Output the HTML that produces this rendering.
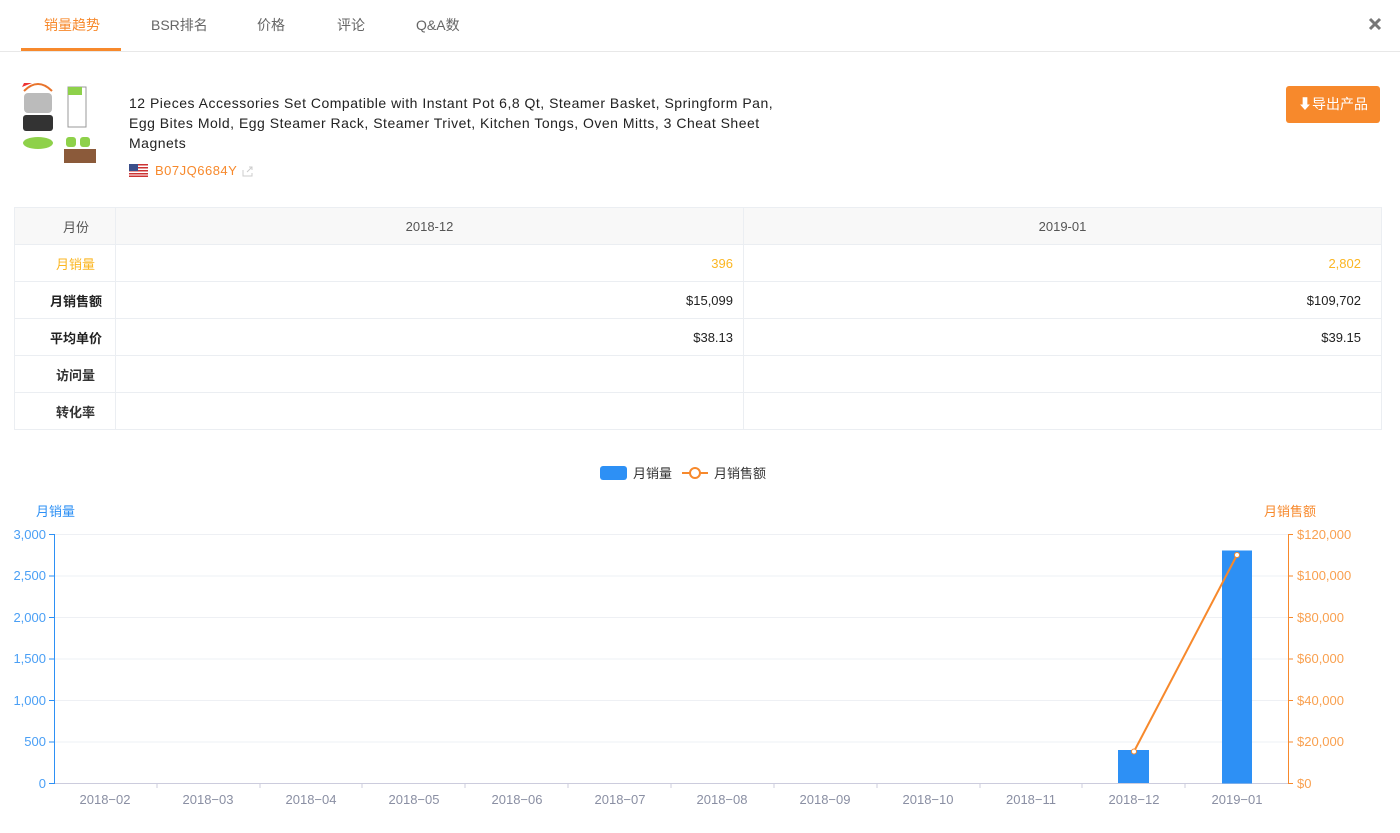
<!DOCTYPE html>
<html><head><meta charset="utf-8"><style>
*{margin:0;padding:0;box-sizing:border-box}
body{width:1400px;height:833px;background:#fff;font-family:"Liberation Sans","Noto Sans CJK SC",sans-serif;position:relative;overflow:hidden;color:#333}
.a{position:absolute;white-space:nowrap}
.tab{top:15px;font-size:14px;color:#666}
td{border:1px solid #ebeef2;height:37px;font-size:13px}
table{border-collapse:collapse;position:absolute;left:14px;top:207px;width:1368px}
</style></head><body>
<div class="a tab" style="left:44px;color:#f7892c">销量趋势</div>
<div class="a tab" style="left:151px">BSR排名</div>
<div class="a tab" style="left:257px">价格</div>
<div class="a tab" style="left:337px">评论</div>
<div class="a tab" style="left:416px">Q&amp;A数</div>
<div class="a" style="left:0;top:51px;width:1400px;height:1px;background:#e8e8e8"></div>
<div class="a" style="left:21px;top:48px;width:100px;height:3px;background:#f7892c"></div>
<svg class="a" style="left:1367px;top:16px" width="16" height="16"><path d="M3 3L13 13M13 3L3 13" stroke="#777" stroke-width="3"/></svg>

<svg class="a" style="left:16px;top:83px" width="84" height="86">
<rect x="8" y="10" width="28" height="20" rx="4" fill="#bbb"/><rect x="7" y="32" width="30" height="16" rx="3" fill="#333"/>
<ellipse cx="22" cy="60" rx="15" ry="6" fill="#8ed14a"/><path d="M6 4 L8 0 L16 0 Z" fill="#e33"/><path d="M8 8Q22 -6 36 8" stroke="#e8742c" stroke-width="2" fill="none"/>
<rect x="52" y="4" width="18" height="40" fill="none" stroke="#999"/><rect x="52" y="4" width="14" height="8" fill="#8ed14a"/>
<rect x="50" y="54" width="10" height="10" rx="3" fill="#8ed14a"/><rect x="64" y="54" width="10" height="10" rx="3" fill="#8ed14a"/>
<rect x="48" y="66" width="32" height="14" fill="#8b5a3a"/>
</svg>
<div class="a" style="left:129px;top:93px;font-size:14px;line-height:20px;color:#222;letter-spacing:0.5px">12 Pieces Accessories Set Compatible with Instant Pot 6,8 Qt, Steamer Basket, Springform Pan,<br>Egg Bites Mold, Egg Steamer Rack, Steamer Trivet, Kitchen Tongs, Oven Mitts, 3 Cheat Sheet<br>Magnets</div>
<svg class="a" style="left:129px;top:164px" width="19" height="13"><rect width="19" height="13" fill="#fff"/><g fill="#c33"><rect y="0" width="19" height="1.5"/><rect y="3" width="19" height="1.5"/><rect y="6" width="19" height="1.5"/><rect y="9" width="19" height="1.5"/><rect y="11.5" width="19" height="1.5"/></g><rect width="9" height="7" fill="#3b4f8a"/></svg>
<div class="a" style="left:155px;top:163px;font-size:13px;color:#f7892c;letter-spacing:0.5px">B07JQ6684Y</div>
<svg class="a" style="left:242px;top:166px" width="12" height="11"><path d="M1 4V10H10V7M5 6L10 1M7 1H10V4" stroke="#ccc" fill="none"/></svg>
<div class="a" style="left:1286px;top:86px;width:94px;height:37px;background:#f7892c;border-radius:3px;color:#fff;font-size:14px;line-height:37px;text-align:center">⬇导出产品</div>

<table>
<tr style="background:#f8f8f8;color:#555"><td style="width:101px;text-align:right;padding-right:26px">月份</td><td style="width:628px;text-align:center">2018-12</td><td style="text-align:center">2019-01</td></tr>
<tr style="color:#fbb622"><td style="text-align:right;padding-right:20px">月销量</td><td style="text-align:right;padding-right:10px">396</td><td style="text-align:right;padding-right:20px">2,802</td></tr>
<tr style="color:#222"><td style="text-align:right;padding-right:13px;font-weight:bold">月销售额</td><td style="text-align:right;padding-right:10px">$15,099</td><td style="text-align:right;padding-right:20px">$109,702</td></tr>
<tr style="color:#222"><td style="text-align:right;padding-right:13px;font-weight:bold">平均单价</td><td style="text-align:right;padding-right:10px">$38.13</td><td style="text-align:right;padding-right:20px">$39.15</td></tr>
<tr><td style="text-align:right;padding-right:20px;font-weight:bold">访问量</td><td></td><td></td></tr>
<tr><td style="text-align:right;padding-right:20px;font-weight:bold">转化率</td><td></td><td></td></tr>
</table>

<svg class="a" style="left:0;top:450px" width="1400" height="383" font-family="Liberation Sans, Noto Sans CJK SC, sans-serif" font-size="13">
<rect x="600" y="16" width="27" height="14" rx="3" fill="#2d90f5"/><text x="633" y="28" fill="#333">月销量</text>
<line x1="682" y1="23" x2="708" y2="23" stroke="#f7892c" stroke-width="2"/><circle cx="695" cy="23" r="5" fill="#fff" stroke="#f7892c" stroke-width="2"/><text x="714" y="28" fill="#333">月销售额</text>
<text x="36" y="66" fill="#2d90f5">月销量</text><text x="1264" y="66" fill="#f7892c">月销售额</text>
<g stroke="#eef0f4"><line x1="54" y1="84.5" x2="1288" y2="84.5"/><line x1="54" y1="126" x2="1288" y2="126"/><line x1="54" y1="167.5" x2="1288" y2="167.5"/><line x1="54" y1="209" x2="1288" y2="209"/><line x1="54" y1="250.5" x2="1288" y2="250.5"/><line x1="54" y1="292" x2="1288" y2="292"/></g>
<line x1="54" y1="333.5" x2="1288" y2="333.5" stroke="#ccd"/>
<g stroke="#ccd"><line x1="157" y1="333" x2="157" y2="338"/><line x1="260" y1="333" x2="260" y2="338"/><line x1="362" y1="333" x2="362" y2="338"/><line x1="465" y1="333" x2="465" y2="338"/><line x1="568" y1="333" x2="568" y2="338"/><line x1="671" y1="333" x2="671" y2="338"/><line x1="774" y1="333" x2="774" y2="338"/><line x1="877" y1="333" x2="877" y2="338"/><line x1="980" y1="333" x2="980" y2="338"/><line x1="1082" y1="333" x2="1082" y2="338"/><line x1="1185" y1="333" x2="1185" y2="338"/></g>
<line x1="54.5" y1="84" x2="54.5" y2="334" stroke="#2d90f5"/>
<line x1="1288.5" y1="84" x2="1288.5" y2="334" stroke="#f7892c"/>
<g fill="#4a9ff5" text-anchor="end"><text x="46" y="89">3,000</text><text x="46" y="130">2,500</text><text x="46" y="172">2,000</text><text x="46" y="213">1,500</text><text x="46" y="255">1,000</text><text x="46" y="296">500</text><text x="46" y="338">0</text></g>
<g stroke="#2d90f5"><line x1="49" y1="84.5" x2="54" y2="84.5"/><line x1="49" y1="126" x2="54" y2="126"/><line x1="49" y1="167.5" x2="54" y2="167.5"/><line x1="49" y1="209" x2="54" y2="209"/><line x1="49" y1="250.5" x2="54" y2="250.5"/><line x1="49" y1="292" x2="54" y2="292"/><line x1="49" y1="333.5" x2="54" y2="333.5"/></g>
<g stroke="#f7892c"><line x1="1288" y1="84.5" x2="1293" y2="84.5"/><line x1="1288" y1="126" x2="1293" y2="126"/><line x1="1288" y1="167.5" x2="1293" y2="167.5"/><line x1="1288" y1="209" x2="1293" y2="209"/><line x1="1288" y1="250.5" x2="1293" y2="250.5"/><line x1="1288" y1="292" x2="1293" y2="292"/><line x1="1288" y1="333.5" x2="1293" y2="333.5"/></g>
<g fill="#f9a04f"><text x="1297" y="89">$120,000</text><text x="1297" y="130">$100,000</text><text x="1297" y="172">$80,000</text><text x="1297" y="213">$60,000</text><text x="1297" y="255">$40,000</text><text x="1297" y="296">$20,000</text><text x="1297" y="338">$0</text></g>
<g fill="#8a8fa3" text-anchor="middle"><text x="105" y="354">2018−02</text><text x="208" y="354">2018−03</text><text x="311" y="354">2018−04</text><text x="414" y="354">2018−05</text><text x="517" y="354">2018−06</text><text x="620" y="354">2018−07</text><text x="722" y="354">2018−08</text><text x="825" y="354">2018−09</text><text x="928" y="354">2018−10</text><text x="1031" y="354">2018−11</text><text x="1134" y="354">2018−12</text><text x="1237" y="354">2019−01</text></g>
<rect x="1118" y="300" width="31" height="33" fill="#2d90f5"/>
<rect x="1222" y="100.5" width="30" height="233" fill="#2d90f5"/>
<line x1="1134" y1="301.5" x2="1237" y2="105" stroke="#f7892c" stroke-width="2"/>
<circle cx="1134" cy="301.5" r="2.5" fill="#fff" stroke="#f7892c"/><circle cx="1237" cy="105" r="2.5" fill="#fff" stroke="#f7892c"/>
</svg>
</body></html>
